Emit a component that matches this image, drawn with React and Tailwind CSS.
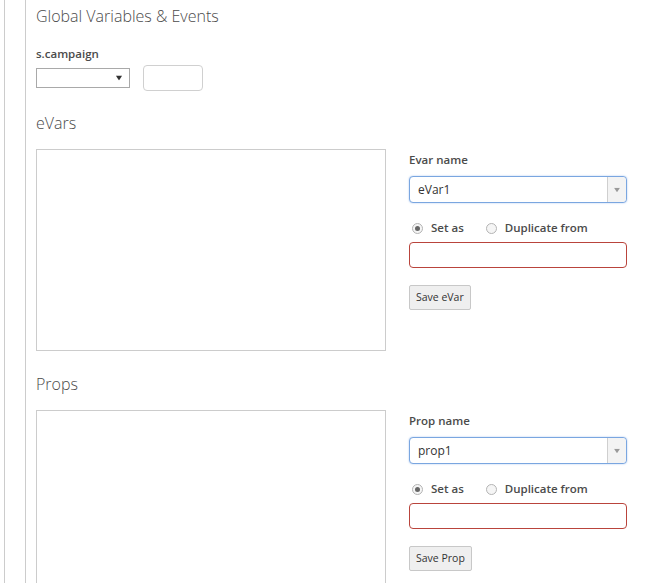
import { useState } from 'react';

function Caret({ className = '' }) {
  return (
    <svg width="8" height="6" viewBox="0 0 8 6" className={className}>
      <path d="M0 0h8L4 6z" fill="currentColor" />
    </svg>
  );
}

function VarBlock({ title, label, value, button, listHeight }) {
  const [mode, setMode] = useState('set');
  return (
    <div>
      <h2 className="text-[16px] font-light text-[#4b4b4b] leading-6">{title}</h2>
      <div className="flex gap-[23px] mt-[14px]">
        <div className={`w-[350px] ${listHeight} border border-[#cccccc] shrink-0`} />
        <div className="w-[218px] pt-[3px]">
          <label className="block text-[11.5px] font-semibold text-[#4b4b4b] leading-4">{label}</label>
          <div className="mt-[8px] flex h-[27px] border border-[#7aa6e0] rounded-[4px] bg-white shadow-[0_0_2px_#a9c6ef]">
            <div className="flex-1 flex items-center px-[8px] text-[12px] text-[#333]">{value}</div>
            <div className="w-[19px] flex items-center justify-center border-l border-[#cfcfcf] bg-[#f3f3f3] rounded-r-[4px] text-[#999]">
              <Caret className="scale-75" />
            </div>
          </div>
          <div className="flex items-center mt-[17px] text-[11.5px] font-semibold text-[#4b4b4b] leading-4">
            <button type="button" onClick={() => setMode('set')} className="flex items-center gap-[8px] ml-[3px]">
              <span className="w-[11px] h-[11px] rounded-full border border-[#b4b4b4] bg-[#f5f5f5] flex items-center justify-center">
                {mode === 'set' && <span className="w-[5px] h-[5px] rounded-full bg-[#666]" />}
              </span>
              Set as
            </button>
            <button type="button" onClick={() => setMode('dup')} className="flex items-center gap-[8px] ml-[22px]">
              <span className="w-[11px] h-[11px] rounded-full border border-[#b4b4b4] bg-[#f5f5f5] flex items-center justify-center">
                {mode === 'dup' && <span className="w-[5px] h-[5px] rounded-full bg-[#666]" />}
              </span>
              Duplicate from
            </button>
          </div>
          <input className="mt-[6px] block w-full h-[26px] border border-[#b9443c] rounded-[4px] outline-none px-2 text-[12px]" />
          <button type="button" className="mt-[17px] h-[25px] px-[6px] border border-[#c8c8c8] bg-[#efefef] text-[10.5px] text-[#333] rounded-[2px]">
            {button}
          </button>
        </div>
      </div>
    </div>
  );
}

export default function App() {
  return (
    <div className="h-[583px] bg-white overflow-hidden pl-[4px]" style={{ fontFamily: '"Open Sans", "Noto Sans", sans-serif' }}>
      <div className="h-full border-l border-[#cccccc] pl-[20px]">
        <div className="h-full border-l border-[#cccccc] pl-[10px] pt-[4px]">
          <h1 className="text-[16px] font-light text-[#4b4b4b] leading-6">Global Variables &amp; Events</h1>
          <label className="block mt-[18px] text-[11.5px] font-semibold text-[#4b4b4b] leading-4">s.campaign</label>
          <div className="flex items-center gap-[13px] mt-[3px]">
            <div className="w-[94px] h-[20px] border border-[#a9a9a9] flex items-center justify-end pr-[6px] text-[#333]">
              <Caret className="scale-[0.8]" />
            </div>
            <div className="w-[60px] h-[26px] border border-[#d0d0d0] rounded-[4px]" />
          </div>
          <div className="mt-[20px]">
            <VarBlock title="eVars" label="Evar name" value="eVar1" button="Save eVar" listHeight="h-[202px]" />
          </div>
          <div className="mt-[21px]">
            <VarBlock title="Props" label="Prop name" value="prop1" button="Save Prop" listHeight="h-[220px]" />
          </div>
        </div>
      </div>
    </div>
  );
}
